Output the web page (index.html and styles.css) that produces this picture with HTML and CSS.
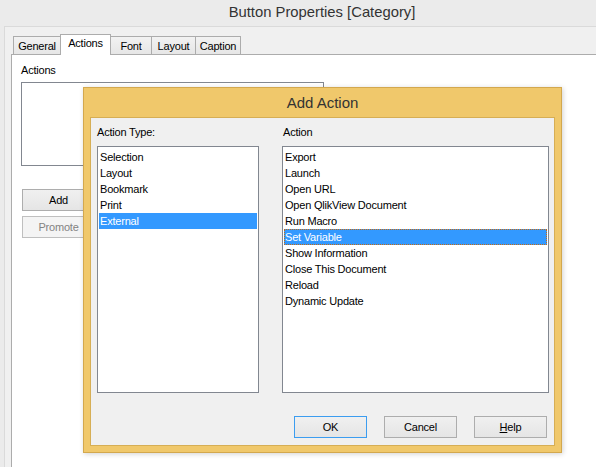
FILE: index.html
```html
<!DOCTYPE html>
<html>
<head>
<meta charset="utf-8">
<link rel="stylesheet" href="styles.css">
</head>
<body>
<div class="window">
  <div class="titlebar">Button Properties [Category]</div>
  <div class="frame">
    <div class="tabs">
      <div class="tab t-general">General</div>
      <div class="tab t-actions active">Actions</div>
      <div class="tab t-font">Font</div>
      <div class="tab t-layout">Layout</div>
      <div class="tab t-caption">Caption</div>
    </div>
    <div class="panel">
      <div class="label">Actions</div>
      <div class="actions-list"></div>
      <div class="btn btn-add">Add</div>
      <div class="btn btn-promote disabled">Promote</div>
    </div>
  </div>

  <div class="dialog">
    <div class="dialog-title">Add Action</div>
    <div class="dialog-body">
      <div class="columns">
        <div class="col col-type">
          <div class="label">Action Type:</div>
          <div class="listbox">
            <div class="item">Selection</div>
            <div class="item">Layout</div>
            <div class="item">Bookmark</div>
            <div class="item">Print</div>
            <div class="item selected">External</div>
          </div>
        </div>
        <div class="col col-action">
          <div class="label label-action">Action</div>
          <div class="listbox">
            <div class="item">Export</div>
            <div class="item">Launch</div>
            <div class="item">Open URL</div>
            <div class="item">Open QlikView Document</div>
            <div class="item">Run Macro</div>
            <div class="item selected focused">Set Variable</div>
            <div class="item">Show Information</div>
            <div class="item">Close This Document</div>
            <div class="item">Reload</div>
            <div class="item">Dynamic Update</div>
          </div>
        </div>
      </div>
      <div class="buttons">
        <div class="btn default">OK</div>
        <div class="btn">Cancel</div>
        <div class="btn"><span class="u">H</span>elp</div>
      </div>
    </div>
  </div>
</div>
</body>
</html>
```

FILE: styles.css
```css
html, body {
  margin: 0;
  padding: 0;
}
body {
  width: 596px;
  height: 467px;
  overflow: hidden;
  background: #ebebeb;
  font-family: "Liberation Sans", Arial, sans-serif;
  font-size: 11px;
  letter-spacing: -0.2px;
  color: #000;
}
.window {
  position: relative;
  width: 596px;
  height: 467px;
  display: flex;
  flex-direction: column;
}
.titlebar {
  height: 26px;
  line-height: 25px;
  text-align: center;
  font-size: 14.8px;
  letter-spacing: 0;
  color: #333;
  padding-left: 48px;
  box-sizing: border-box;
}
.frame {
  flex: 1;
  margin-left: 4px;
  border-top: 1px solid #dadada;
  border-left: 1px solid #dadada;
  background: #f0f0f0;
  display: flex;
  flex-direction: column;
}
.tabs {
  display: flex;
  align-items: flex-end;
  height: 28px;
  padding-left: 8px;
  box-sizing: border-box;
}
.tab {
  box-sizing: border-box;
  height: 18px;
  margin-bottom: 1px;
  margin-left: -1px;
  border: 1px solid #acacac;
  border-bottom: none;
  background: linear-gradient(#f2f2f2, #e6e6e6);
  text-align: center;
  line-height: 18px;
}
.t-general { width: 48px; margin-left: 0; }
.t-actions { width: 51px; }
.t-font { width: 42px; }
.t-layout { width: 45px; }
.t-caption { width: 46px; }
.tab.active {
  position: relative;
  z-index: 2;
  height: 21px;
  margin-bottom: 0;
  background: #fff;
  line-height: 17px;
}
.panel {
  flex: 1;
  margin-top: -1px;
  margin-left: 6px;
  border-top: 1px solid #acacac;
  border-left: 1px solid #acacac;
  background: #fff;
  padding: 7px 0 0 9px;
  display: flex;
  flex-direction: column;
  align-items: flex-start;
}
.label {
  line-height: 16px;
  height: 16px;
}
.actions-list {
  margin-top: 4px;
  width: 303px;
  height: 84px;
  box-sizing: border-box;
  border: 1px solid #828790;
  background: #fff;
}
.btn {
  box-sizing: border-box;
  width: 73px;
  height: 22px;
  border: 1px solid #adadad;
  background: linear-gradient(#f0f0f0, #e5e5e5);
  text-align: center;
  line-height: 20px;
}
.btn-add {
  margin-top: 23px;
  margin-left: 1px;
}
.btn-promote {
  margin-top: 5px;
  margin-left: 1px;
}
.btn.disabled {
  border-color: #bfbfbf;
  background: #f4f4f4;
  color: #838383;
}
.btn.default {
  border-color: #3c9df0;
}
.u {
  text-decoration: underline;
}

/* Add Action dialog (modal overlay) */
.dialog {
  position: absolute;
  left: 83px;
  top: 87px;
  width: 479px;
  height: 366px;
  box-sizing: border-box;
  border: 1px solid #d3a84e;
  background: #f0c86b;
  padding: 0 6px 6px 6px;
  display: flex;
  flex-direction: column;
  box-shadow: 1px 1px 5px rgba(0, 0, 0, 0.18);
}
.dialog-title {
  height: 29px;
  line-height: 29px;
  text-align: center;
  font-size: 15px;
  letter-spacing: 0;
  color: #333;
}
.dialog-body {
  flex: 1;
  border: 1px solid #d6ae55;
  background: #f0f0f0;
  padding: 6px 7px 7px 6px;
  display: flex;
  flex-direction: column;
}
.columns {
  display: flex;
  gap: 23px;
}
.col .label {
  margin-bottom: 6px;
}
.label-action {
  padding-left: 1px;
}
.listbox {
  box-sizing: border-box;
  height: 247px;
  border: 1px solid #828790;
  background: #fff;
  padding: 1px 1px;
}
.col-type .listbox { width: 162px; }
.col-action .listbox { width: 267px; }
.item {
  box-sizing: border-box;
  height: 16px;
  line-height: 16px;
  padding-left: 1px;
}
.item:first-child {
  margin-top: 1px;
}
.item.selected {
  background: #3399ff;
  color: #fff;
}
.item.focused {
  outline: 1px dotted #c86a10;
  outline-offset: -1px;
}
.buttons {
  margin-top: auto;
  display: flex;
  justify-content: flex-end;
  gap: 17px;
}
```
